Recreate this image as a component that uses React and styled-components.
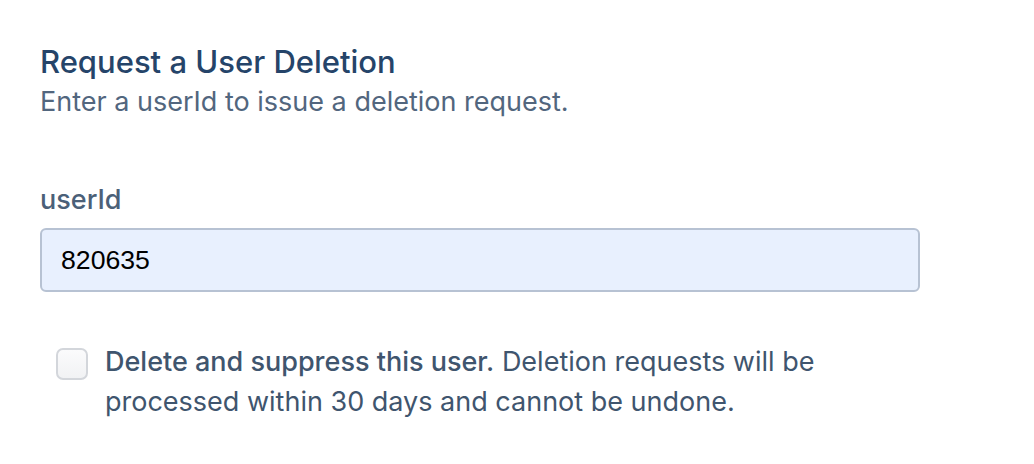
import React from "react";
import styled, { createGlobalStyle } from "styled-components";

const Global = createGlobalStyle`
  html, body { margin: 0; padding: 0; background: #ffffff; }
  body { font-family: Inter, "Noto Sans", sans-serif; }
`;

const Page = styled.div`
  padding: 44px 0 0 40px;
  width: 880px;
`;

const Title = styled.h2`
  margin: 0;
  font-size: 31px;
  line-height: 36px;
  font-weight: 500;
  color: #254469;
`;

const Subtitle = styled.p`
  margin: 4px 0 0;
  font-size: 27px;
  line-height: 36px;
  color: #52667e;
`;

const Field = styled.div`
  margin-top: 62px;
  display: flex;
  flex-direction: column;
  gap: 10px;
`;

const Label = styled.label`
  font-size: 27px;
  line-height: 36px;
  font-weight: 500;
  color: #4b6078;
`;

const Input = styled.input`
  box-sizing: border-box;
  width: 880px;
  height: 64px;
  padding: 0 19px;
  border: 2px solid #b7c2d3;
  border-radius: 6px;
  background: #e8f0fe;
  font-family: "Liberation Sans", Arial, sans-serif;
  font-size: 26.67px;
  color: #000;
  outline: none;
`;

const CheckRow = styled.label`
  margin-top: 50px;
  display: flex;
  align-items: flex-start;
  gap: 17px;
  padding-left: 16px;
`;

const Box = styled.span`
  flex: none;
  box-sizing: border-box;
  width: 32px;
  height: 32px;
  margin-top: 6px;
  border: 2px solid #d3d6db;
  border-radius: 7px;
  background: linear-gradient(#fbfbfc, #f1f2f4);
`;

const CheckText = styled.span`
  font-size: 27px;
  line-height: 40px;
  color: #3f556e;
`;

const Strong = styled.strong`
  font-weight: 500;
`;

export default function App() {
  return (
    <>
      <Global />
      <Page>
        <Title>Request a User Deletion</Title>
        <Subtitle>Enter a userId to issue a deletion request.</Subtitle>
        <Field>
          <Label htmlFor="uid">userId</Label>
          <Input id="uid" defaultValue="820635" />
        </Field>
        <CheckRow>
          <Box />
          <CheckText>
            <Strong>Delete and suppress this user.</Strong> Deletion requests will be
            processed within 30 days and cannot be undone.
          </CheckText>
        </CheckRow>
      </Page>
    </>
  );
}
